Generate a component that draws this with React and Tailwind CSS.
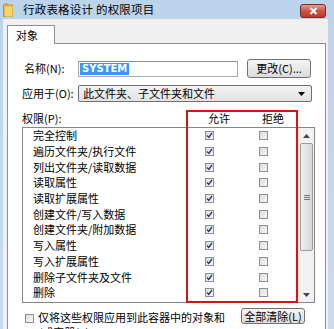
import React from "react";

const perms = [
  "完全控制",
  "遍历文件夹/执行文件",
  "列出文件夹/读取数据",
  "读取属性",
  "读取扩展属性",
  "创建文件/写入数据",
  "创建文件夹/附加数据",
  "写入属性",
  "写入扩展属性",
  "删除子文件夹及文件",
  "删除",
];

const font = { fontFamily: '"Noto Sans CJK SC", "Liberation Sans", sans-serif' };

function Box({ checked }) {
  return (
    <div className="w-[9px] h-[9px] border border-[#8f8f8f] bg-gradient-to-br from-[#dcdcdc] to-[#f7f7f7] flex items-center justify-center">
      {checked && (
        <svg width="7" height="7" viewBox="0 0 7 7">
          <path d="M1 3.5 L2.8 5.5 L6 1" stroke="#2b3d7a" strokeWidth="1.4" fill="none" />
        </svg>
      )}
    </div>
  );
}

function Folder() {
  return (
    <svg width="10" height="14" viewBox="0 0 10 14">
      <path d="M0.5 1.5 L4 0.5 L4 2 L9.5 2 L9.5 13.5 L0.5 13.5 Z" fill="#e8b93c" stroke="#b88a1c" strokeWidth="0.8" />
      <path d="M2 4 L9.5 3 L9.5 13.5 L2 13.5 Z" fill="#f5d46a" />
    </svg>
  );
}

function Btn({ children, className }) {
  return (
    <div className={"border border-[#707070] rounded-[3px] bg-gradient-to-b from-[#f6f6f6] to-[#dcdcdc] flex items-center justify-center text-[11px] leading-none text-black whitespace-nowrap " + className}>
      {children}
    </div>
  );
}

export default function App() {
  return (
    <div className="w-[334px] h-[329px] overflow-hidden bg-gradient-to-b from-[#bcd3ec] to-[#c9dbef] relative" style={font}>
      {/* title bar */}
      <div className="h-[19px] flex items-center pl-[3px] pr-[8px]">
        <Folder />
        <span className="ml-[10px] text-[11.5px] text-black leading-none tracking-[0.2px]">行政表格设计 的权限项目</span>
        <div className="ml-auto mt-[2px] w-[26px] h-[14px] rounded-[3px] border border-[#7d2a24] bg-gradient-to-b from-[#e59a90] via-[#cf5348] to-[#b8392e] flex items-center justify-center">
          <svg width="9" height="8" viewBox="0 0 9 8">
            <path d="M1.5 1 L7.5 7 M7.5 1 L1.5 7" stroke="#fff" strokeWidth="2" />
          </svg>
        </div>
      </div>

      {/* body */}
      <div className="ml-[3px] mr-[6px] h-[310px] bg-[#f0f0f0] pl-[4px] pr-[2px] pt-[6px]">
        <div className="w-[48px] h-[19px] border border-b-0 border-[#8e8f8f] bg-white flex items-center pl-[8px] text-[11px] text-black relative z-10 -mb-px">
          对象
        </div>
        <div className="border border-[#8e8f8f] bg-white h-[300px] pl-[14px] pr-[8px] pt-[15px] relative">
          {/* name row */}
          <div className="flex items-center h-[19px]">
            <span className="w-[56px] pl-[2px] text-[11px] text-black">名称(N):</span>
            <div className="w-[160px] h-[16px] border border-[#abadb3] border-t-[#8b8e94] flex items-center pl-[1px]">
              <span className="bg-[#3399ff] text-white text-[10px] font-bold px-[2px] leading-[12px]" style={{ fontFamily: '"DejaVu Sans", sans-serif' }}>SYSTEM</span>
            </div>
            <Btn className="ml-[9px] w-[64px] h-[19px]">更改(C)...</Btn>
          </div>

          {/* apply row */}
          <div className="flex items-center h-[17px] mt-[7px]">
            <span className="w-[56px] text-[11px] text-black">应用于(O):</span>
            <div className="w-[234px] h-[17px] border border-[#707070] rounded-[2px] bg-gradient-to-b from-[#f4f4f4] to-[#e2e2e2] flex items-center pl-[4px] pr-[6px] text-[11px] text-black">
              <span>此文件夹、子文件夹和文件</span>
              <svg className="ml-auto" width="7" height="4" viewBox="0 0 7 4">
                <path d="M0 0 L7 0 L3.5 4 Z" fill="#000" />
              </svg>
            </div>
          </div>

          {/* header */}
          <div className="flex items-center h-[15px] mt-[9px] text-[11px] text-black whitespace-nowrap">
            <span className="w-[182px]">权限(P):</span>
            <span className="w-[30px] text-center">允许</span>
            <span className="ml-[24px] w-[30px] text-center">拒绝</span>
          </div>

          {/* list */}
          <div className="mt-[1px] w-[293px] h-[176px] border border-[#828790] flex">
            <div className="flex-1">
              {perms.map((p, i) => (
                <div key={i} className="h-[15.7px] flex items-center text-[11px] text-black">
                  <span className="w-[182px] pl-[10px] leading-none whitespace-nowrap">{p}</span>
                  <Box checked />
                  <span className="w-[45px]" />
                  <Box />
                </div>
              ))}
            </div>
            {/* scrollbar */}
            <div className="w-[16px] bg-[#f2f2f2] border-l border-[#e8e8e8] flex flex-col">
              <div className="h-[15px] flex items-center justify-center">
                <svg width="7" height="4" viewBox="0 0 7 4"><path d="M0 4 L7 4 L3.5 0 Z" fill="#444" /></svg>
              </div>
              <div className="h-[108px] mx-[1px] border border-[#9c9c9c] rounded-[2px] bg-gradient-to-r from-[#eeeeee] to-[#d8d8d8] flex items-center justify-center">
                <div className="flex flex-col gap-[1px]">
                  <div className="w-[6px] h-px bg-[#777]" />
                  <div className="w-[6px] h-px bg-[#777]" />
                  <div className="w-[6px] h-px bg-[#777]" />
                </div>
              </div>
              <div className="flex-1" />
              <div className="h-[15px] flex items-center justify-center">
                <svg width="7" height="4" viewBox="0 0 7 4"><path d="M0 0 L7 0 L3.5 4 Z" fill="#444" /></svg>
              </div>
            </div>
          </div>

          {/* bottom row */}
          <div className="flex items-start mt-[5px]">
            <div className="mt-[6px] ml-[3px] w-[9px] h-[9px] border border-[#8f8f8f] bg-gradient-to-br from-[#dcdcdc] to-[#f7f7f7]" />
            <div className="ml-[4px] w-[205px] mt-[2px] text-[11px] leading-[15px] text-black">
              仅将这些权限应用到此容器中的对象和<br />/或容器(T)
            </div>
            <Btn className="ml-[-2px] w-[64px] h-[16px]">全部清除(L)</Btn>
          </div>

          {/* red highlight box */}
          <div className="absolute left-[178px] top-[66px] w-[112px] h-[193px] border-2 border-[#d7141a]" />
        </div>
      </div>
    </div>
  );
}
